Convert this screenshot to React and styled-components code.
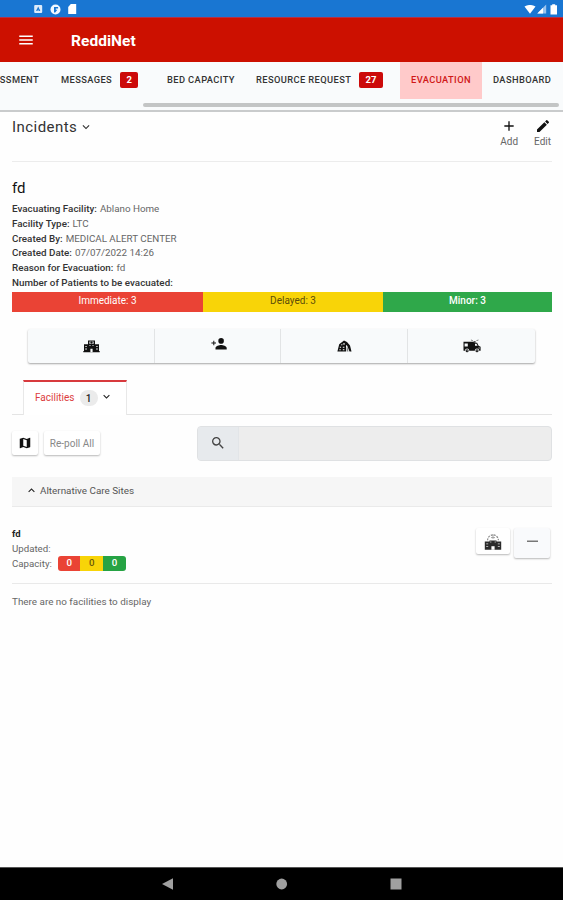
import styled, { createGlobalStyle } from "styled-components"
import { MdAdd, MdEdit, MdExpandLess, MdExpandMore, MdMap, MdMenu, MdSearch } from "react-icons/md"

const GlobalStyle = createGlobalStyle`
  *{
    box-sizing:border-box;
  }
  body{
    margin:0;
    background:#fff;
    font-family:Roboto, "Liberation Sans", sans-serif;
    color:#222;
  }
  svg{
    display:block;
    flex:none;
  }
`

const Screen = styled.div`
  width:563px;
  height:900px;
  display:flex;
  flex-direction:column;
  overflow:hidden;
  background:#fefefe;
`

// Android status bar
const StatusBar = styled.div`
  height:17px;
  flex:none;
  display:flex;
  align-items:center;
  justify-content:space-between;
  padding:1px 4px 0 33px;
  background:#1976d2;
`

const StatusGroup = styled.div`
  display:flex;
  align-items:center;
  gap:${({ $gap }) => $gap}px;
`

const Header = styled.header`
  height:45px;
  flex:none;
  display:flex;
  align-items:center;
  gap:36px;
  padding:0 17px;
  border-top:1px solid #b0304a;
  background:#cc1000;
  color:#fff;
`

const Brand = styled.h1`
  margin:2px 0 0;
  font-size:15.5px;
  font-weight:700;
  letter-spacing:.05px;
`

// Tabs
const TabStrip = styled.nav`
  height:50px;
  flex:none;
  display:flex;
  flex-direction:column;
  justify-content:space-between;
  background:#f9fbfc;
  border-bottom:2px solid #c9cbcc;
`

const TabRow = styled.div`
  height:37px;
  display:grid;
  grid-template-columns:50px 106px 89px 155px 82px 81px;
`

const Tab = styled.a`
  display:flex;
  align-items:center;
  justify-content:${({ $end }) => ($end ? "flex-end" : "flex-start")};
  gap:8px;
  padding:0 11px 2px;
  overflow:hidden;
  white-space:nowrap;
  font-size:9.3px;
  font-weight:500;
  letter-spacing:.4px;
  color:${({ $active }) => ($active ? "#d01818" : "#333")};
  background:${({ $active }) => ($active ? "#ffcaca" : "transparent")};
`

const TabBadge = styled.span`
  height:16px;
  padding:0 6.3px;
  border-radius:2px;
  background:#cc0a0a;
  color:#fff;
  font-size:9.5px;
  font-weight:700;
  line-height:16px;
  letter-spacing:0;
`

const ScrollThumb = styled.div`
  height:4px;
  margin:0 4px 3px 143px;
  border-radius:2px;
  background:#c3c5c5;
`

// Page
const Page = styled.main`
  flex:1;
  display:flex;
  flex-direction:column;
  padding:0 11px 0 12px;
`

const Toolbar = styled.div`
  height:50px;
  flex:none;
  display:flex;
  justify-content:space-between;
  padding-top:6px;
  border-bottom:1px solid #ececec;
`

const Selector = styled.div`
  height:18px;
  display:flex;
  align-items:center;
  gap:2px;
  font-size:15px;
  letter-spacing:.45px;
  color:#333;
`

const Actions = styled.div`
  display:flex;
  gap:16px;
  padding-right:1px;
`

const Action = styled.div`
  display:flex;
  flex-direction:column;
  align-items:center;
  gap:1px;
  font-size:10px;
  line-height:14px;
  color:#666;
  svg{
    color:#111;
  }
`

const Title = styled.h2`
  margin:17px 0 5px;
  font-size:15px;
  line-height:18px;
  font-weight:400;
  color:#111;
`

const Details = styled.dl`
  margin:0 0 1px;
  font-size:9.8px;
  line-height:14.8px;
`

const Detail = styled.div`
  display:flex;
  gap:3px;
  white-space:nowrap;
  dt{
    font-weight:500;
    color:#333;
    letter-spacing:.03px;
  }
  dd{
    margin:0;
    color:#666;
  }
`

const Triage = styled.div`
  height:20px;
  flex:none;
  display:grid;
  grid-template-columns:191px 180px 169px;
`

const TriageCell = styled.div`
  background:${({ $bg }) => $bg};
  color:${({ $color }) => $color};
  text-align:center;
  font-size:10px;
  line-height:18px;
  font-weight:${({ $weight }) => $weight || 400};
`

const ButtonGroup = styled.div`
  height:34px;
  flex:none;
  display:grid;
  grid-template-columns:126px 126px 127px 128px;
  margin:17px 17px 0 16px;
  border-radius:2px;
  background:#f8fafb;
  box-shadow:0 1px 2px rgba(0,0,0,.35);
`

const GroupButton = styled.button`
  display:flex;
  align-items:center;
  justify-content:center;
  padding:${({ $lift }) => ($lift ? "0 0 4px 2px" : "1px 0 0")};
  border:0;
  background:none;
  color:#111;
  &:not(:first-child){
    border-left:1px solid #e2e4e5;
  }
`

const SectionTabs = styled.div`
  height:35px;
  flex:none;
  display:flex;
  margin-top:17px;
  padding-left:11px;
  border-bottom:1px solid #e4e4e4;
`

const SectionTab = styled.div`
  width:104px;
  height:35px;
  display:flex;
  align-items:center;
  padding:0 0 1px 11px;
  border:1px solid #e8e8e8;
  border-top:2px solid #d83a3e;
  border-bottom:0;
  background:#fff;
  color:#dc3c40;
  font-size:10px;
  svg{
    margin:-3px 0 0 2px;
    color:#222;
  }
`

const Count = styled.span`
  width:18px;
  height:16px;
  margin:1px 0 0 5px;
  border-radius:8px;
  background:#ebebeb;
  color:#222;
  text-align:center;
  font-weight:500;
  line-height:17px;
`

const FilterRow = styled.div`
  height:35px;
  flex:none;
  display:flex;
  align-items:center;
  gap:6px;
  margin-top:11px;
`

const FlatButton = styled.button`
  width:${({ $w }) => $w}px;
  height:${({ $h }) => $h}px;
  flex:none;
  display:flex;
  align-items:center;
  justify-content:center;
  padding:0;
  border:0;
  border-radius:2px;
  background:${({ $bg }) => $bg || "#fff"};
  box-shadow:0 1px 2px rgba(0,0,0,.28);
  font:400 10px Roboto, "Liberation Sans", sans-serif;
  color:${({ $color }) => $color || "#111"};
`

const Search = styled.div`
  width:355px;
  height:35px;
  display:flex;
  margin-left:auto;
  border:1px solid #dfe1e3;
  border-radius:4px;
  background:#ededed;
  overflow:hidden;
`

const SearchIcon = styled.div`
  width:41px;
  display:flex;
  align-items:center;
  justify-content:center;
  border-right:1px solid #e2e5e8;
  background:#e7eaed;
  color:#444;
`

const Accordion = styled.div`
  height:30px;
  flex:none;
  display:flex;
  align-items:center;
  gap:2px;
  margin-top:16px;
  padding:0 0 2px 13px;
  background:#f6f6f6;
  border-bottom:1px solid #eaeaea;
  font-size:9.9px;
  color:#555;
  svg{
    color:#222;
  }
`

const Site = styled.div`
  height:77px;
  flex:none;
  display:flex;
  justify-content:space-between;
  padding-top:19px;
  border-bottom:1px solid #e9e9e9;
`

const SiteInfo = styled.div`
  font-size:9.7px;
  line-height:15px;
  color:#666;
  b{
    display:block;
    font-weight:700;
    font-size:9.5px;
    color:#222;
  }
`

const Capacity = styled.div`
  display:flex;
  align-items:center;
  gap:6px;
`

const Pills = styled.div`
  width:68px;
  height:15px;
  display:grid;
  grid-template-columns:repeat(3, 1fr);
  border-radius:3px;
  overflow:hidden;
`

const Pill = styled.span`
  background:${({ $bg }) => $bg};
  color:${({ $color }) => $color};
  text-align:center;
  line-height:14px;
  font-weight:500;
`

const SiteActions = styled.div`
  display:flex;
  align-items:flex-start;
  gap:4px;
  padding:2px 2px 0 0;
`

const Empty = styled.p`
  margin:10px 0 0;
  font-size:9.9px;
  line-height:15px;
  color:#666;
`

// Android navigation bar
const NavBar = styled.footer`
  height:33px;
  flex:none;
  display:flex;
  justify-content:center;
  align-items:center;
  gap:102px;
  border-top:1px solid #555;
  background:#000;
`

const HospitalIcon = () => (
  <svg width="17" height="13" viewBox="0 0 17 13" fill="currentColor">
    <path d="M5 .5h7v3.7h4V11h.7v1.2H.3V11H1V4.2h4z" />
    <path fill="#c4c6c7" d="M6.2 1.5h4.6v2.3H6.2z" />
    <path d="M8 1.6h1v2H8zM7.3 2.2h2.4v.8H7.3z" />
    <path fill="#f8fafb" d="M2.2 6.2h1.7v.8H2.2zM2.2 8.6h1.7v.8H2.2zM13.1 6.2h1.7v.8h-1.7zM13.1 8.6h1.7v.8h-1.7zM6.4 5.2h1.2V6H6.4zM9.4 5.2h1.2V6H9.4zM7.4 8.7h2.2v3.5H7.4z" />
  </svg>
)

const AddPersonIcon = () => (
  <svg width="16" height="12" viewBox="0 0 16 12" fill="currentColor">
    <circle cx="10.1" cy="2.9" r="2.8" />
    <path d="M4.5 11.5V10c0-2 3.7-3 5.6-3s5.6 1 5.6 3v1.5zM2.3 2.7h1v1.7H5v1H3.3v1.8h-1V5.4H.4v-1h1.9z" />
  </svg>
)

const ShelterIcon = () => (
  <svg width="15" height="12" viewBox="0 0 15 12" fill="currentColor">
    <path d="M2.2 4.2 7 .5l3 1.5 3 3.5 1.5 6h-2L10.2 5.8 9 5v6.5H.4z" />
    <path fill="#f8fafb" d="m4.1 4.7 1.2-.9v1.5H4.1zM6.4 3h1.2v1.8H6.4zM2.8 6.8h1.3v1H2.8zM5.8 6.8h1.6v1H5.8zM2.4 9.2h1.3v1H2.4zM5.8 9.2h1.6v1H5.8z" />
    <path d="M9.6 7.2h.9l1 4.3H9.6z" opacity=".5" />
  </svg>
)

const AmbulanceIcon = () => (
  <svg width="18" height="14" viewBox="0 0 18 14" fill="currentColor">
    <path d="M.5 2.8h9.9l.8 1h2.9l1.5 2.9 2 1v4H.5z" />
    <path d="M10.6 2.1h2v1.8h-2zM8 .6l2 .8-.2.6-2-.8zM13.3 1.4l2-.8.2.6-2 .8z" opacity=".7" />
    <path fill="#f8fafb" d="M1.6 4.4h3.2v3H1.6zM12 4.8h1.5l1 2h-2.5z" />
    <path fill="#999" d="M15.3 8.6h1.7v1h-1.7z" />
    <circle cx="4.1" cy="11.6" r="2.1" fill="#f8fafb" />
    <circle cx="14" cy="11.6" r="2.1" fill="#f8fafb" />
    <circle cx="4.1" cy="11.7" r="1.5" />
    <circle cx="14" cy="11.7" r="1.5" />
    <circle cx="4.1" cy="11.7" r=".5" fill="#f8fafb" />
    <circle cx="14" cy="11.7" r=".5" fill="#f8fafb" />
  </svg>
)

const CareSiteIcon = () => (
  <svg width="18" height="20" viewBox="0 -2 18 20" fill="currentColor">
    <path d="M3.6 7.3a5.4 5.4 0 0 1 10.8 0" fill="none" stroke="#888" strokeWidth="1.2" strokeDasharray="2 1" />
    <path d="M9 1.4v4.4M7 4.6h4" fill="none" stroke="#999" strokeWidth=".9" />
    <path d="M.8 8.5h4.7v-.9h7v.9h4.7v8.3H.8z" fill="#2b2b2b" />
    <path fill="#ddd" d="M6.3 8.6h1v1h-1zM10.7 8.6h1v1h-1zM2.2 10.4h2v.8h-2zM13.8 10.4h2v.8h-2zM2.2 13.2h2v.8h-2zM13.8 13.2h2v.8h-2z" />
    <path fill="#fff" d="M7.4 13.2h3.2v3.6H7.4z" />
  </svg>
)

const details = [
  { label: "Evacuating Facility:", value: "Ablano Home" },
  { label: "Facility Type:", value: "LTC" },
  { label: "Created By:", value: "MEDICAL ALERT CENTER" },
  { label: "Created Date:", value: "07/07/2022 14:26" },
  { label: "Reason for Evacuation:", value: "fd" },
  { label: "Number of Patients to be evacuated:", value: "" },
]

const triage = [
  { name: "Immediate", bg: "#ea4335", color: "#fff", weight: 400 },
  { name: "Delayed", bg: "#f8d408", color: "#5c4d08", weight: 400 },
  { name: "Minor", bg: "#2fa84a", color: "#fff", weight: 500 },
]

const StatusIcons = () => (
  <StatusBar>
    <StatusGroup $gap={7}>
      <svg width="10" height="10" viewBox="0 0 10 10">
        <rect x="1.2" y="1" width="8" height="8" rx="1" fill="#dcebfa" />
        <path d="M5.2 2.5 7.3 7H6.2L5.2 4.9 4.2 7H3.1zM3.5 5.5h3.4v1H3.5z" fill="#1976d2" />
      </svg>
      <svg width="11" height="11" viewBox="0 0 11 11">
        <circle cx="5.5" cy="5.5" r="5" fill="#f2f8ff" />
        <path d="M4 3h4.1v1.5H5.8v1.2h1.6L5.2 8.6H4z" fill="#1976d2" />
      </svg>
      <svg width="9" height="10" viewBox="0 0 9 10">
        <path d="M2.8 0h5.4v10H.2V3z" fill="#fff" />
      </svg>
    </StatusGroup>
    <StatusGroup $gap={1}>
      <svg width="12" height="9" viewBox="0 0 12 9">
        <path d="M.5 1.5Q6-1.6 11.5 1.5L6 8.8z" fill="#fff" />
      </svg>
      <svg width="10" height="10" viewBox="0 0 10 10">
        <path d="M9.2.5v9H.3z" fill="#9cc4ee" />
        <path d="M6 3.8v5.7H.3z" fill="#fff" />
      </svg>
      <svg width="11" height="11" viewBox="0 0 11 11">
        <path d="M4.2.3h3v1H9v9.2H2.5V1.3h1.7z" fill="#fff" />
      </svg>
    </StatusGroup>
  </StatusBar>
)

export default function App() {
  return (
    <>
      <GlobalStyle />
      <Screen>
        <StatusIcons />
        <Header>
          <MdMenu size={18} />
          <Brand>ReddiNet</Brand>
        </Header>
        <TabStrip>
          <TabRow>
            <Tab $end>ASSESSMENT</Tab>
            <Tab>MESSAGES <TabBadge>2</TabBadge></Tab>
            <Tab>BED CAPACITY</Tab>
            <Tab>RESOURCE REQUEST <TabBadge>27</TabBadge></Tab>
            <Tab $active>EVACUATION</Tab>
            <Tab>DASHBOARD</Tab>
          </TabRow>
          <ScrollThumb />
        </TabStrip>

        <Page>
          <Toolbar>
            <Selector>Incidents <MdExpandMore size={14} /></Selector>
            <Actions>
              <Action><MdAdd size={16} />Add</Action>
              <Action><MdEdit size={16} />Edit</Action>
            </Actions>
          </Toolbar>

          <Title>fd</Title>
          <Details>
            {details.map((item) =>
              <Detail key={item.label}>
                <dt>{item.label}</dt>
                <dd>{item.value}</dd>
              </Detail>
            )}
          </Details>
          <Triage>
            {triage.map((item) =>
              <TriageCell key={item.name} $bg={item.bg} $color={item.color} $weight={item.weight}>{item.name}: 3</TriageCell>
            )}
          </Triage>

          <ButtonGroup>
            <GroupButton><HospitalIcon /></GroupButton>
            <GroupButton $lift><AddPersonIcon /></GroupButton>
            <GroupButton><ShelterIcon /></GroupButton>
            <GroupButton><AmbulanceIcon /></GroupButton>
          </ButtonGroup>

          <SectionTabs>
            <SectionTab>
              Facilities <Count>1</Count> <MdExpandMore size={13} />
            </SectionTab>
          </SectionTabs>

          <FilterRow>
            <FlatButton $w={26} $h={24}><MdMap size={14} /></FlatButton>
            <FlatButton $w={56} $h={24} $color="#888">Re-poll All</FlatButton>
            <Search>
              <SearchIcon><MdSearch size={16} /></SearchIcon>
            </Search>
          </FilterRow>

          <Accordion><MdExpandLess size={13} />Alternative Care Sites</Accordion>

          <Site>
            <SiteInfo>
              <b>fd</b>
              Updated:
              <Capacity>
                Capacity:
                <Pills>
                  <Pill $bg="#ea4335" $color="#fff">0</Pill>
                  <Pill $bg="#f8d408" $color="#6b5a08">0</Pill>
                  <Pill $bg="#26a344" $color="#fff">0</Pill>
                </Pills>
              </Capacity>
            </SiteInfo>
            <SiteActions>
              <FlatButton $w={34} $h={26}><CareSiteIcon /></FlatButton>
              <FlatButton $w={36} $h={30} $bg="#f9fafc">
                <svg width="11" height="8" viewBox="0 0 11 8"><path d="M0 1.5h11V3H0z" fill="#777" /></svg>
              </FlatButton>
            </SiteActions>
          </Site>
          <Empty>There are no facilities to display</Empty>
        </Page>

        <NavBar>
          <svg width="12" height="12" viewBox="0 0 12 12"><path d="M0 6 11 .3v11.4z" fill="#a0a0a0" /></svg>
          <svg width="12" height="12" viewBox="0 0 12 12"><circle cx="5.7" cy="6" r="5.4" fill="#a0a0a0" /></svg>
          <svg width="12" height="12" viewBox="0 0 12 12"><path d="M.5.5h11v11H.5z" fill="#a0a0a0" /></svg>
        </NavBar>
      </Screen>
    </>
  )
}
